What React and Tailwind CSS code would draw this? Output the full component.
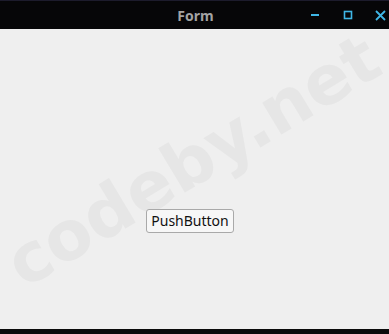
import React from "react";

const TitleBar = () => (
  <div className="relative flex h-[29px] items-center justify-center border-t border-[#1c1b2c] bg-[#060608]">
    <span className="ml-[2px] text-[14px] font-bold text-[#a3a3a3]" style={{ fontFamily: "'Noto Sans', sans-serif" }}>
      Form
    </span>
    <div className="absolute right-0 top-0 flex h-full items-center">
      <button className="flex h-full w-[32px] items-center justify-center">
        <svg width="10" height="10" viewBox="0 0 10 10">
          <rect x="1" y="4" width="8" height="2" fill="#3fb6e6" />
        </svg>
      </button>
      <button className="flex h-full w-[32px] items-center justify-center pl-[2px]">
        <svg width="10" height="10" viewBox="0 0 10 10">
          <rect x="1.5" y="1.5" width="7" height="7" fill="none" stroke="#3fb6e6" strokeWidth="1.6" />
        </svg>
      </button>
      <button className="flex h-full w-[26px] items-center justify-start pl-[12px]">
        <svg width="11" height="11" viewBox="0 0 11 11">
          <path d="M1 1 L10 10 M10 1 L1 10" stroke="#3fb6e6" strokeWidth="1.8" />
        </svg>
      </button>
    </div>
  </div>
);

export default function App() {
  return (
    <div className="flex h-[334px] w-[389px] flex-col overflow-hidden bg-[#060608]">
      <TitleBar />
      <div className="relative flex h-[300px] items-start justify-center overflow-hidden bg-[#efefef]">
        <div
          className="pointer-events-none absolute left-[-27px] top-[98px] w-[440px] -rotate-[31deg] text-center text-[68px] font-bold leading-none text-[#e6e6e6] select-none"
          style={{ fontFamily: "'DejaVu Sans', sans-serif" }}
        >
          codeby.net
        </div>
        <button
          className="relative mt-[180px] mr-[9px] h-[24px] rounded-[3px] border border-[#a9a9a9] bg-[#f7f7f7] px-[4px] text-[14px] leading-none text-[#111]"
          style={{ fontFamily: "'Noto Sans', sans-serif" }}
        >
          PushButton
        </button>
      </div>
      <div className="h-[5px] bg-[#0b0b0b]" />
    </div>
  );
}
